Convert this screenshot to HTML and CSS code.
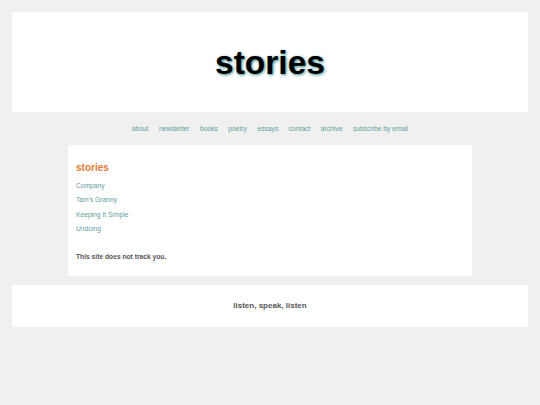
FILE: index.html
```html
<!DOCTYPE html>
<html lang="en">
<head>
<meta charset="utf-8">
<title>stories</title>
<link rel="stylesheet" href="styles.css">
</head>
<body>
<header class="masthead">
  <h1 class="site-title">stories</h1>
</header>
<nav class="topnav">
  <a href="#">about</a>
  <a href="#">newsletter</a>
  <a href="#">books</a>
  <a href="#">poetry</a>
  <a href="#">essays</a>
  <a href="#">contact</a>
  <a href="#">archive</a>
  <a href="#">subscribe by email</a>
</nav>
<main class="content">
  <h2 class="section-title">stories</h2>
  <ul class="story-list">
    <li><a href="#">Company</a></li>
    <li><a href="#">Tam's Granny</a></li>
    <li><a href="#">Keeping It Simple</a></li>
    <li><a href="#">Undoing</a></li>
  </ul>
  <p class="notice">This site does not track you.</p>
</main>
<footer class="footer">
  <p class="motto">listen, speak, listen</p>
</footer>
</body>
</html>
```
FILE: styles.css
```css
html, body {
  margin: 0;
  padding: 0;
}
body {
  background: #f0f0f0;
  font-family: "Liberation Sans", Arial, sans-serif;
  font-size: 6.7px;
  color: #555;
  padding: 12px;
}
a {
  color: #5f9ea0;
  text-decoration: none;
}
.masthead {
  background: #fff;
  height: 100px;
  display: flex;
  align-items: center;
  justify-content: center;
}
.site-title {
  margin: 0;
  padding-top: 2px;
  font-size: 33.5px;
  font-weight: bold;
  color: #000;
  text-shadow: 1px 1px 3px rgba(10, 110, 110, 0.85);
}
.topnav {
  height: 33px;
  display: flex;
  align-items: center;
  justify-content: center;
  gap: 10.5px;
}
.content {
  background: #fff;
  width: 404px;
  margin: 0 auto;
  box-sizing: border-box;
  padding: 17px 8px 12px;
}
.section-title {
  margin: 0;
  font-size: 10px;
  line-height: 11.5px;
  color: #e07b39;
}
.story-list {
  list-style: none;
  margin: 5.4px 0 0;
  padding: 0;
  line-height: 14.4px;
}
.notice {
  margin: 13px 0 0;
  line-height: 14.4px;
  font-weight: bold;
}
.footer {
  background: #fff;
  margin-top: 9px;
  height: 42px;
  display: flex;
  align-items: center;
  justify-content: center;
}
.motto {
  margin: 0;
  font-size: 8px;
  font-weight: bold;
  color: #555;
}
```
